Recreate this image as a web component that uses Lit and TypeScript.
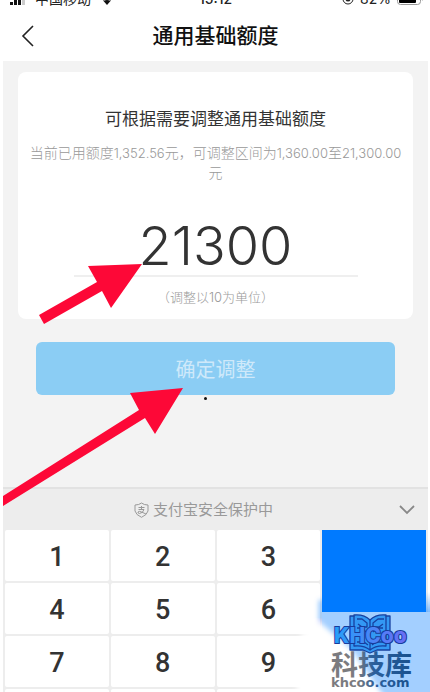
import { LitElement, html, css, svg } from "lit";
import { customElement, state } from "lit/decorators.js";

@customElement("app-root")
export class AppRoot extends LitElement {
  @state() private amount = "21300";

  static styles = css`
    :host {
      display: block;
      position: relative;
      height: 100vh;
      overflow: hidden;
      background: #fff;
      font-family: Inter, "Noto Sans CJK SC", sans-serif;
      color: #333;
    }
    * { box-sizing: border-box; }
    button, input { font: inherit; border: 0; margin: 0; padding: 0; }
    h1, h2, p { margin: 0; font-weight: 400; }
    .phone { display: flex; flex-direction: column; margin: 0 2px 0 3px; background: #f3f3f3; }
    .status {
      display: grid;
      grid-template-columns: 1fr auto 1fr;
      grid-template-rows: 9px;
      align-items: end;
      font-size: 14px;
      line-height: 20px;
      background: #fff;
      color: #222;
    }
    .status > span { display: flex; align-items: flex-end; gap: 8px; }
    .carrier { padding-left: 6px; }
    .time { font-weight: 500; }
    .status .battery { justify-content: flex-end; gap: 6px; padding-right: 4px; }
    .status svg { display: block; flex: none; margin-bottom: 4px; }
    .bar {
      display: grid;
      grid-template-columns: 48px 1fr 48px;
      align-items: center;
      height: 52px;
      padding-top: 2px;
      background: #fff;
      color: #111;
    }
    .back { background: none; height: 48px; padding-left: 17px; text-align: left; }
    .back svg, .hide svg { display: block; }
    h1 { font-size: 21px; line-height: 32px; font-weight: 500; text-align: center; }
    main { padding: 11px 15px 0; height: 426px; }
    .card {
      display: flex;
      flex-direction: column;
      align-items: center;
      background: #fff;
      border-radius: 8px;
      padding: 34px 8px 12px;
      text-align: center;
    }
    h2 { font-size: 17px; line-height: 26px; }
    .hint, .unit { line-height: 20px; color: #999; font-weight: 300; }
    .hint { font-size: 14px; margin-top: 11px; }
    .num { font-size: 13px; }
    .amount {
      width: 284px;
      max-width: 100%;
      height: 66px;
      margin-top: 28px;
      padding-top: 4px;
      font-size: 54px;
      font-weight: 300;
      line-height: 60px;
      text-align: center;
      color: #333;
      background: none;
      outline: none;
      border-bottom: 2px solid #efefef;
      border-radius: 0;
    }
    .unit { font-size: 13px; margin-top: 10px; }
    .confirm {
      display: block;
      width: calc(100% - 36px);
      height: 53px;
      margin: 23px 18px 0;
      border-radius: 6px;
      background: #8bcdf4;
      color: #cfe9fa;
      font-size: 20px;
      font-weight: 400;
    }
    .dot { width: 3px; height: 3px; border-radius: 2px; background: #111; margin: 2px 0 0 47%; }
    .safe {
      display: grid;
      grid-template-columns: 24px 1fr 48px;
      align-items: center;
      height: 43px;
      background: #ededed;
      border-top: 2px solid #e2e2e2;
      color: #999;
      font-size: 15px;
      font-weight: 300;
    }
    .safe p { grid-column: 2; display: flex; align-items: center; justify-content: center; gap: 4px; line-height: 24px; }
    .hide { background: none; height: 40px; padding-left: 18px; }
    .keys {
      display: grid;
      grid-template-columns: repeat(4, 1fr);
      grid-auto-rows: 51px;
      gap: 2px;
      padding: 0 2px;
      background: #ededed;
    }
    .key { padding-top: 4px; background: #fff; border-radius: 2px; font: 500 27px/47px "Roboto", sans-serif; color: #333; }
    .done { grid-column: 4; grid-row: 1 / span 4; background: #007aff; }
    .marks { position: absolute; left: 0; top: 0; pointer-events: none; }
    .stamp { position: absolute; right: 0; bottom: 0; pointer-events: none; }
    .kh { font: 800 21px Inter, sans-serif; }
    .cn { font: 700 27px "Noto Sans CJK SC", sans-serif; }
    .url { font: 700 13px "DejaVu Sans", sans-serif; }
  `;

  private press(k: string) {
    this.amount = this.amount + k;
  }

  private stamp() {
    return svg`
      <svg class="stamp" width="140" height="112" viewBox="290 580 140 112">
        <defs>
          <filter id="soft" x="-20%" y="-20%" width="140%" height="140%"><feGaussianBlur stdDeviation="2.5"/></filter>
          <linearGradient id="kh" x1="0" x2="1"><stop offset="0" stop-color="#26a0f8"/><stop offset="1" stop-color="#6a6cf5"/></linearGradient>
          <linearGradient id="ink" gradientUnits="userSpaceOnUse" x1="330" x2="414" y1="660" y2="650">
            <stop offset=".3" stop-color="#7b7b7f"/><stop offset=".5" stop-color="#2b5f9c"/><stop offset="1" stop-color="#174f8c"/>
          </linearGradient>
          <linearGradient id="edge" x1="0" x2="0" y1="0" y2="1"><stop offset="0" stop-color="#007aff" stop-opacity="0"/><stop offset="1" stop-color="#007aff" stop-opacity=".5"/></linearGradient>
        </defs>
        <path d="M426 592H430V612H426Z" fill="url(#edge)"/>
        <path d="M426 612H430V692H426Z" fill="#007aff"/>
        <g filter="url(#soft)">
          <path d="M319 600H323V632L319 622Z" fill="#007aff" opacity=".5"/>
          <path d="M300 636L314 624L322 624L352 650L388 702H296Z" fill="#fff"/>
        </g>
        <path d="M322 612H430V692H322Z" fill="#fff" opacity=".64"/>
        <g stroke="#1741a0" stroke-width="1.3" fill="#3398f4" stroke-linejoin="round">
          <path d="M350 616h4v-1q10-1 16 5q6-6 16-5v1h4v34h-13l-7 3l-7-3h-13z"/>
          <path d="M354 616v30q10-1 16 4q6-5 16-4v-30M370 620v30" fill="none"/>
          <path d="M357 619h5l5 4v4h-5l-4-3M357 628h5l4 4M384 619h-6l-5 4v4h6l4-3M383 628h-6l-4 4M357 642h7l4 3M383 642h-7l-4 3" fill="none"/>
        </g>
        <text class="kh" x="334" y="643" fill="url(#kh)" stroke="#173c9c" stroke-width="2" paint-order="stroke">KHCoo</text>
        <text class="cn" x="331" y="675" fill="url(#ink)">科技库</text>
        <text class="url" x="331" y="687" fill="url(#ink)">khcoo.com</text>
      </svg>`;
  }

  render() {
    return html`
      <div class="phone">
        <div class="status">
          <span class="carrier">
            <svg width="18" height="12" viewBox="0 0 18 12"><path d="M1 9h3v3H1zM5 7h3v5H5zM9 4h3v8H9z" fill="#111"/><path d="M13 1h3v11h-3z" fill="#ccc"/></svg>
            中国移动
            <svg width="16" height="12" viewBox="0 0 16 12"><path d="M1 4q7-6 14 0M4 7q4-3 8 0" fill="none" stroke="#111" stroke-width="2"/><path d="M4.500 8q3.500-2 7 0L8 12z" fill="#111"/></svg>
          </span>
          <span class="time">15:12</span>
          <span class="battery">
            <svg width="12" height="12" viewBox="0 0 12 12"><circle cx="6" cy="6" r="5" fill="none" stroke="#222"/><circle cx="6" cy="6" r="2.500" fill="#222"/></svg>
            82%
            <svg width="27" height="12" viewBox="0 0 27 12"><rect x=".5" y=".5" width="23" height="11" rx="3" fill="none" stroke="#999"/><rect x="2" y="2" width="17" height="8" rx="1" fill="#000"/><path d="M25 4q2 2 0 4z" fill="#999"/></svg>
          </span>
        </div>
        <header class="bar">
          <button class="back" aria-label="返回">
            <svg width="16" height="24" viewBox="0 0 16 24"><path d="M13 2L3 12L13 22" fill="none" stroke="#222" stroke-width="1.600"/></svg>
          </button>
          <h1>通用基础额度</h1>
        </header>
        <main>
          <section class="card">
            <h2>可根据需要调整通用基础额度</h2>
            <p class="hint">当前已用额度<span class="num">1,352.56</span>元，可调整区间为<span class="num">1,360.00</span>至<span class="num">21,300.00</span>元</p>
            <input class="amount" aria-label="调整额度" inputmode="none" .value=${this.amount} />
            <p class="unit">（调整以10为单位）</p>
          </section>
          <button class="confirm">确定调整</button>
          <div class="dot"></div>
        </main>
        <div class="safe">
          <p>
            <svg width="15" height="16" viewBox="0 0 15 16" fill="none" stroke="#999"><path d="M7.500 1Q10 3 14 3V9Q13 13 7.500 15.300Q2 13 1 9V3Q5 3 7.500 1Z"/><path d="M4.500 5.500h6M7.500 4v3.500M4.500 7.500h5.500Q9 11 5.500 11.500Q3.500 11.300 4 10Q5 8.700 7.500 10L12 12"/></svg>
            支付宝安全保护中
          </p>
          <button class="hide" aria-label="收起键盘">
            <svg width="18" height="12" viewBox="0 0 18 12"><path d="M2 2L9 9L16 2" fill="none" stroke="#888" stroke-width="1.800"/></svg>
          </button>
        </div>
        <div class="keys">
          ${["1", "2", "3", "4", "5", "6", "7", "8", "9", "", "0", "."].map(
            (k) => html`<button class="key" @click=${() => this.press(k)}>${k}</button>`
          )}
          <button class="done" aria-label="完成"></button>
        </div>
      </div>
      <svg class="marks" width="200" height="520" viewBox="0 0 200 520" fill="#fd0837">
        <path d="M142 264L88 266L97 282L39 315L44 324L102 291L111 308Z"/>
        <path d="M183 388L130 393L139 410L3 496V506L145 418L155 434Z"/>
      </svg>
      ${this.stamp()}
    `;
  }
}
